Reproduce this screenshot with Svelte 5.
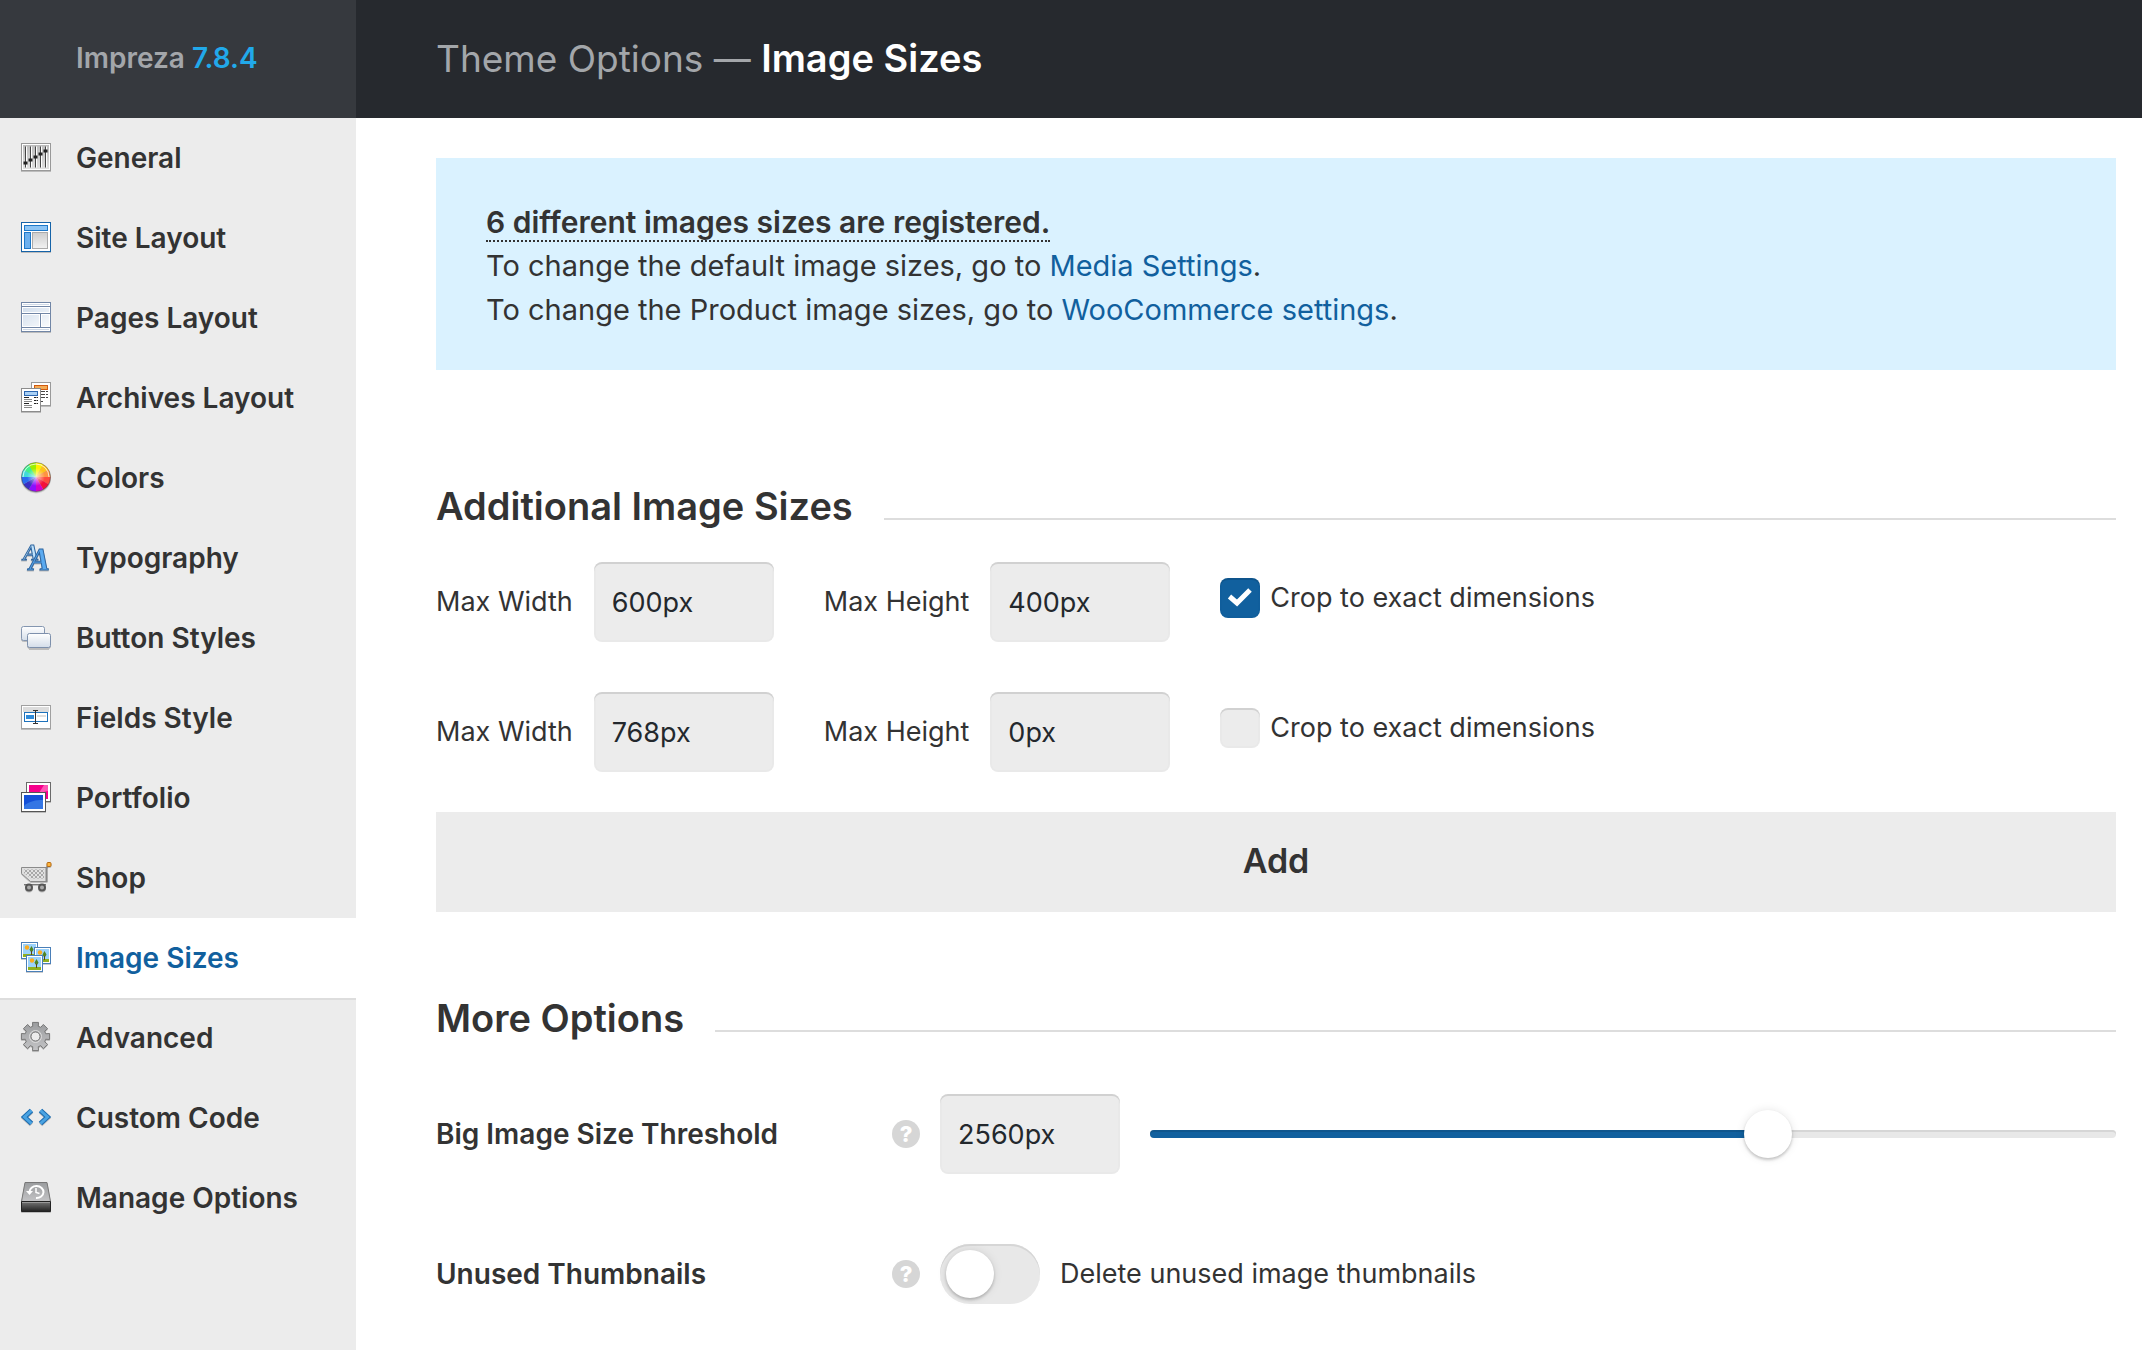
<script lang="ts">
  // Theme options screen: section list on the left, "Image Sizes" panel on the right.

  type Size = { width: string; height: string; crop: boolean }

  const sections = [
    { icon: 'general', label: 'General' },
    { icon: 'site', label: 'Site Layout' },
    { icon: 'pages', label: 'Pages Layout' },
    { icon: 'archives', label: 'Archives Layout' },
    { icon: 'colors', label: 'Colors' },
    { icon: 'typography', label: 'Typography' },
    { icon: 'buttons', label: 'Button Styles' },
    { icon: 'fields', label: 'Fields Style' },
    { icon: 'portfolio', label: 'Portfolio' },
    { icon: 'shop', label: 'Shop' },
    { icon: 'images', label: 'Image Sizes' },
    { icon: 'advanced', label: 'Advanced' },
    { icon: 'code', label: 'Custom Code' },
    { icon: 'manage', label: 'Manage Options' },
  ]

  let active = $state('Image Sizes')
  let sizes = $state<Size[]>([
    { width: '600px', height: '400px', crop: true },
    { width: '768px', height: '0px', crop: false },
  ])
  let threshold = $state(2560)
  let deleteUnused = $state(false)

  const maxThreshold = 4000
  let fill = $derived((threshold / maxThreshold) * 100)

  // Clockwise from twelve o'clock
  const wheelColors = [
    '#fff000', '#ffc21a', '#ff9440', '#ff4a3c', '#f5103a', '#d400c8',
    '#8a10ff', '#3a2fc4', '#2a6cf0', '#3fdcd8', '#3ff08c', '#9cf000',
  ]

  function polar(cx: number, cy: number, r: number, deg: number) {
    const a = ((deg - 90) * Math.PI) / 180
    return `${(cx + r * Math.cos(a)).toFixed(2)} ${(cy + r * Math.sin(a)).toFixed(2)}`
  }

  function wedge(i: number) {
    return `M15 15L${polar(15, 15, 14.5, i * 30)}A14.5 14.5 0 0 1 ${polar(15, 15, 14.5, i * 30 + 30)}Z`
  }

  function gear(teeth: number) {
    const step = 360 / teeth
    let d = ''
    for (let i = 0; i < teeth; i++) {
      const mid = i * step
      const pts = [
        polar(14.5, 14.5, 10.6, mid - 15),
        polar(14.5, 14.5, 14.4, mid - 12),
        polar(14.5, 14.5, 14.4, mid + 12),
        polar(14.5, 14.5, 10.6, mid + 15),
      ]
      d += (i === 0 ? 'M' : 'L') + pts.join('L')
    }
    return d + 'Z'
  }

  function addSize() {
    sizes.push({ width: '0px', height: '0px', crop: false })
  }
</script>

{#snippet photo(x: number, y: number)}
  <g transform="translate({x} {y})">
    <rect x=".5" y=".5" width="16" height="16" fill="#fff" stroke="#4a7fb8" />
    <rect x="2" y="2" width="13" height="13" fill="#9bd2fb" />
    <path d="M2 12h13v3H2z" fill="#8fb01e" />
    <circle cx="6" cy="5.5" r="2.2" fill="#fbab1e" />
    <path d="M10.5 4l2 3.5-1 2h-2l-1-2z" fill="#4f8420" />
    <path d="M10 9h1v4h-1z" fill="#5c4318" />
  </g>
{/snippet}

{#snippet icon(name: string)}
  <svg class="icon" viewBox="-1 0 32 32" aria-hidden="true">
    {#if name === 'general'}
      <rect x=".5" y="1.5" width="29" height="27" fill="#fff" stroke="#999" />
      <rect x="2" y="3" width="26" height="24" fill="url(#steel)" />
      {#each [21, 18, 15, 12, 9] as y, i}
        <path d="M{4.5 + i * 5} 4.5v21" stroke="#444" />
        <path d="M{5.5 + i * 5} 4.5v21" stroke="#fff" />
        <rect x={2.5 + i * 5} y={y - 1.5} width="4" height="3" fill="#222" />
      {/each}
    {:else if name === 'site'}
      <rect x=".5" y=".5" width="29" height="29" fill="#fff" stroke="#1563a8" />
      <rect x="3.5" y="3.5" width="23" height="5" fill="#8cc4f4" stroke="#1e78c8" />
      <rect x="3.5" y="10.5" width="6" height="16" fill="#6cb0ee" stroke="#1e78c8" />
      <rect x="11.5" y="10.5" width="15" height="16" fill="url(#pale)" stroke="#aaa" />
    {:else if name === 'pages'}
      <rect x=".5" y=".5" width="29" height="29" fill="#fff" stroke="#7186a6" />
      <path d="M2 6h26v4H2zM2 13h16v11H2zM21 13h7v11h-7z" fill="url(#mist)" />
      <path d="M2 2.5h26M2 27.5h26" stroke="#cfd9e6" />
      <path d="M1 4.5h28M1 11.5h28M1 25.5h28M19.5 12v13" stroke="#7186a6" />
    {:else if name === 'archives'}
      <rect x="10.5" y=".5" width="19" height="23" fill="#fff" stroke="#9a9a9a" />
      <rect x="13.5" y="3.5" width="13" height="4" fill="#f4ab55" stroke="#d05a10" />
      <path d="M20 9.5h7M20 12.5h7M20 15.5h7M20 19.5h2" stroke="#444" stroke-dasharray="4 1" />
      <rect x=".5" y="6.5" width="19" height="23" fill="#fff" stroke="#8c8c8c" />
      <rect x="3.5" y="9.5" width="13" height="4" fill="#a9d0f5" stroke="#2c66b0" />
      <path d="M3 15.5h5M3 21.5h5" stroke="#222" />
      <path d="M3 17.5h8M3 19.5h8M3 23.5h8M3 25.5h8" stroke="#888" />
      <path d="M13 15.5h4M13 18.5h4M13 21.5h4" stroke="#222" stroke-dasharray="2.5 .5" />
    {:else if name === 'colors'}
      <circle cx="15" cy="15.5" r="15" fill="#8a8a8a" opacity=".5" />
      {#each wheelColors as color, i}
        <path d={wedge(i)} fill={color} />
      {/each}
      <circle cx="15" cy="15" r="9" fill="url(#glow)" />
      <circle cx="15" cy="15" r="14.5" fill="none" stroke="#333" stroke-opacity=".35" />
      <path d="M2 15a13 13 0 0 1 26 0" fill="none" stroke="#fff" stroke-opacity=".7" />
    {:else if name === 'typography'}
      <text class="glyph"><tspan x="2" y="18" font-size="24" fill="#bfe2fb">A</tspan><tspan x="8" y="28" font-size="31" fill="#5aaaf0">A</tspan></text>
    {:else if name === 'buttons'}
      <rect x=".5" y="4.5" width="23" height="14" rx="2" fill="url(#key)" stroke="#8496b0" />
      <rect x="6.5" y="11.5" width="23" height="14" rx="2" fill="url(#key)" stroke="#7d90ac" />
      <path d="M8 26.5h20" stroke="#bbb" />
    {:else if name === 'fields'}
      <rect x=".5" y="3.5" width="29" height="23" fill="#fff" stroke="#a0a0a0" />
      <path d="M2 5h26v5H2z" fill="#dcdcdc" />
      <rect x="3.5" y="10.5" width="23" height="9" fill="#fff" stroke="#1e72bc" />
      <path d="M5 13h8v4H5z" fill="#2f8ad8" />
      <path d="M16 13h9v2h-9z" fill="#dedede" />
      <path d="M12 8.5h5M12 21.5h5M14.5 9v12" stroke="#333" />
    {:else if name === 'portfolio'}
      <rect x="5.5" y=".5" width="24" height="19" fill="#fff" stroke="#6a6a6a" />
      <path d="M8 3h19v14H8z" fill="#f5008c" />
      <path d="M27 3v6l-9 2 5-8z" fill="#ff55b4" />
      <rect x=".5" y="10.5" width="24" height="19" fill="#fff" stroke="#555" />
      <path d="M3 13h19v14H3z" fill="#1450d8" />
      <path d="M3 24c5-5 12-6 19-6v9H3z" fill="#3576e4" />
    {:else if name === 'shop'}
      <path d="M.5 5.5h25v14h-16l-9-8z" fill="#dedede" stroke="#8a8a8a" />
      <path d="M3 7.5h20v9H10L3 11z" fill="url(#mesh)" />
      <path d="M25.5 20V6l2-3" fill="none" stroke="#888" stroke-width="2" />
      <path d="M3 22.5h22" stroke="#777" />
      <rect x="26" y=".5" width="4" height="4" rx="1" fill="#ffb43c" stroke="#b46a14" />
      <circle cx="8" cy="25.5" r="3" fill="#aaa" stroke="#555" stroke-width="2" />
      <circle cx="21" cy="25.5" r="3" fill="#aaa" stroke="#555" stroke-width="2" />
    {:else if name === 'images'}
      {@render photo(0, 0)}
      {@render photo(13, 5)}
      {@render photo(5, 13)}
    {:else if name === 'advanced'}
      <path d={gear(8)} fill="url(#metal)" stroke="#777" stroke-linejoin="round" />
      <circle cx="14.5" cy="14.5" r="6" fill="none" stroke="#ddd" />
      <circle cx="14.5" cy="14.5" r="4.5" fill="#ececec" stroke="#777" />
    {:else if name === 'code'}
      <path d="M10.5 8.5l-7 6.5 7 6.5M19.5 8.5l7 6.5-7 6.5" class="chevron edge" />
      <path d="M10.5 8.5l-7 6.5 7 6.5M19.5 8.5l7 6.5-7 6.5" class="chevron" />
    {:else if name === 'manage'}
      <path d="M4 .5h22l3.500 19H.5z" fill="url(#metal)" stroke="#777" />
      <path d="M.5 19.5h29v10H.5z" fill="url(#dark)" stroke="#222" />
      <path d="M1 20.5h28" stroke="#999" />
      <path d="M8.5 10a7 6 0 1 1 6.500 6" fill="none" stroke="#fff" stroke-width="2" />
      <path d="M5 9h7l-3.500 4z" fill="#fff" />
      <path d="M15 6v4.5l3.500 1" fill="none" stroke="#fff" stroke-width="1.5" />
    {/if}
  </svg>
{/snippet}

{#snippet help(topic: string)}
  <button type="button" class="help" aria-label="Help: {topic}">?</button>
{/snippet}

<svg class="defs" width="0" height="0" aria-hidden="true">
  <defs>
    <linearGradient id="steel" x2="0" y2="1"><stop stop-color="#bbb" /><stop offset="1" stop-color="#e0e0e0" /></linearGradient>
    <linearGradient id="pale" x2="0" y2="1"><stop stop-color="#cdcdcd" /><stop offset="1" stop-color="#f2f2f2" /></linearGradient>
    <linearGradient id="mist" x2="1" y2="1"><stop stop-color="#d2deec" /><stop offset="1" stop-color="#f8fafc" /></linearGradient>
    <linearGradient id="key" x2="0" y2="1"><stop stop-color="#fff" /><stop offset="1" stop-color="#d3dde9" /></linearGradient>
    <linearGradient id="metal" x2="0" y2="1"><stop stop-color="#9a9c9e" /><stop offset="1" stop-color="#c4c4c6" /></linearGradient>
    <linearGradient id="dark" x2="0" y2="1"><stop stop-color="#777" /><stop offset="1" stop-color="#222" /></linearGradient>
    <radialGradient id="glow"><stop stop-color="#fff" stop-opacity=".7" /><stop offset="1" stop-color="#fff" stop-opacity="0" /></radialGradient>
    <pattern id="mesh" width="4" height="4" patternUnits="userSpaceOnUse">
      <path d="M0 0h4v4H0z" fill="#e2e2e2" />
      <path d="M0 0h2v2H0zM2 2h2v2H2z" fill="#a8a8a8" />
    </pattern>
  </defs>
</svg>

<div class="page">
  <header class="header">
    <div class="brand">Impreza <span class="version">7.8.4</span></div>
    <h1>Theme Options — <strong>{active}</strong></h1>
  </header>

  <div class="body">
    <nav class="sidebar" aria-label="Sections">
      {#each sections as { icon: name, label }}
        <a
          href="#{name}"
          class="section"
          class:active={label === active}
          aria-current={label === active ? 'page' : undefined}
          onclick={() => (active = label)}
        >
          {@render icon(name)}
          <span>{label}</span>
        </a>
      {/each}
    </nav>

    <main class="content">
      <div class="notice">
        <p><strong class="hint">6 different images sizes are registered.</strong></p>
        <p>To change the default image sizes, go to <a href="#media">Media Settings</a>.</p>
        <p>To change the Product image sizes, go to <a href="#woocommerce">WooCommerce settings</a>.</p>
      </div>

      <h2>Additional Image Sizes</h2>
      <div class="sizes">
        {#each sizes as size, i}
          <div class="size">
            <div class="field">
              <label for="width-{i}">Max Width</label>
              <input id="width-{i}" class="text" type="text" bind:value={size.width} />
            </div>
            <div class="field">
              <label for="height-{i}">Max Height</label>
              <input id="height-{i}" class="text" type="text" bind:value={size.height} />
            </div>
            <label class="crop">
              <span class="tick">
                <input type="checkbox" bind:checked={size.crop} />
                <svg viewBox="0 0 40 40" aria-hidden="true"><path d="M9.5 18.5L17 25L30 12" /></svg>
              </span>
              Crop to exact dimensions
            </label>
          </div>
        {/each}
      </div>
      <button type="button" class="add" onclick={addSize}>Add</button>

      <h2>More Options</h2>
      <div class="option">
        <label class="name" for="threshold">Big Image Size Threshold</label>
        {@render help('Big Image Size Threshold')}
        <input
          id="threshold"
          class="text"
          type="text"
          value="{threshold}px"
          onchange={(e) => (threshold = parseInt(e.currentTarget.value) || 0)}
        />
        <div class="slider">
          <div class="fill" style="width: {fill}%"></div>
          <input
            type="range"
            min="0"
            max={maxThreshold}
            step="20"
            aria-label="Big Image Size Threshold"
            bind:value={threshold}
          />
        </div>
      </div>
      <div class="option">
        <span class="name">Unused Thumbnails</span>
        {@render help('Unused Thumbnails')}
        <label class="switch">
          <input type="checkbox" role="switch" bind:checked={deleteUnused} />
          Delete unused image thumbnails
        </label>
      </div>
    </main>
  </div>
</div>

<style>
  :global(body) {
    background: #fff;
  }
  .defs {
    position: absolute;
  }
  .page {
    --blue: #11609e;
    --gray: #ececec;
    --inset: inset 0 2px 0 rgba(0, 0, 0, 0.1), inset 0 0 0 2px rgba(0, 0, 0, 0.01);
    display: flex;
    flex-direction: column;
    min-height: 100vh;
    font: 27px/44px Inter, "Liberation Sans", sans-serif;
    color: #333;
  }
  a {
    color: var(--blue);
    text-decoration: none;
  }
  input,
  button {
    margin: 0;
    font: inherit;
    color: inherit;
  }

  .header {
    display: flex;
    height: 118px;
    align-items: stretch;
    background: #26292e;
    color: #a3a6aa;
    line-height: 116px;
  }
  .brand {
    box-sizing: border-box;
    width: 356px;
    padding-left: 76px;
    background: #36393e;
    font-size: 28px;
    font-weight: 600;
  }
  .version {
    color: #21a9ea;
  }
  h1 {
    margin: 0;
    padding-left: 80px;
    font-size: 37px;
    font-weight: 400;
  }
  h1 strong {
    font-size: 38px;
    font-weight: 600;
    color: #fff;
  }

  .body {
    display: flex;
    flex: 1;
  }
  .sidebar {
    flex: 0 0 356px;
    background: var(--gray);
  }
  .section {
    display: flex;
    align-items: center;
    gap: 24px;
    height: 80px;
    padding-left: 20px;
    font-size: 28px;
    font-weight: 600;
    color: #333;
  }
  .section.active {
    background: #fff;
    box-shadow: 0 2px 0 #ddd;
    color: var(--blue);
  }
  .icon {
    width: 32px;
    height: 32px;
    overflow: visible;
    filter: drop-shadow(0 1px 0 rgba(0, 0, 0, 0.2));
  }
  .glyph {
    font-family: "Liberation Serif", serif;
    font-style: italic;
    font-weight: 700;
    stroke: #2f66a0;
    stroke-width: 1;
  }
  .chevron {
    fill: none;
    stroke: #4aa3e2;
    stroke-width: 3;
  }
  .chevron.edge {
    stroke: #1b6bb0;
    stroke-width: 5;
  }

  .content {
    flex: 1;
    min-width: 0;
    padding: 40px 26px 40px 80px;
  }
  .notice {
    padding: 42px 50px 38px;
    background: #daf2ff;
    font-size: 29px;
  }
  .notice p {
    height: 44px;
    margin: 0;
  }
  .hint {
    border-bottom: 2px dotted #333;
    font-size: 30px;
    font-weight: 600;
  }

  h2 {
    display: flex;
    align-items: flex-end;
    gap: 31px;
    margin: 110px 0 30px;
    font-size: 38px;
    font-weight: 600;
    line-height: 52px;
  }
  h2::after {
    content: "";
    flex: 1;
    height: 2px;
    margin-bottom: 12px;
    background: #ddd;
  }
  .sizes {
    display: grid;
    gap: 50px;
  }
  .size {
    display: flex;
    gap: 50px;
  }
  .field {
    display: flex;
    align-items: center;
    gap: 21px;
  }
  .text {
    box-sizing: border-box;
    width: 180px;
    height: 80px;
    padding: 0 18px;
    border: 0;
    border-radius: 8px;
    background: var(--gray);
    box-shadow: var(--inset);
    color: #23282d;
  }
  .crop {
    display: flex;
    align-items: center;
    align-self: flex-start;
    gap: 10px;
    height: 72px;
  }
  .tick {
    display: grid;
  }
  .tick > * {
    grid-area: 1 / 1;
    width: 40px;
    height: 40px;
  }
  .tick input {
    appearance: none;
    border-radius: 8px;
    background: var(--gray);
    box-shadow: var(--inset);
  }
  .tick input:checked {
    background: var(--blue);
  }
  .tick svg {
    fill: none;
    stroke: none;
    stroke-width: 5;
    pointer-events: none;
  }
  .tick input:checked + svg {
    stroke: #fff;
  }
  .add {
    display: block;
    width: 100%;
    height: 100px;
    margin-top: 40px;
    padding: 0 0 2px;
    border: 0;
    background: var(--gray);
    font-size: 34px;
    font-weight: 600;
  }

  .add + h2 {
    margin: 80px 0 50px;
  }
  .option {
    display: flex;
    align-items: center;
    min-height: 80px;
  }
  .option + .option {
    margin-top: 60px;
  }
  .name {
    flex: 0 0 456px;
    font-size: 28px;
    font-weight: 600;
  }
  .help {
    width: 28px;
    height: 28px;
    margin-right: 20px;
    padding: 0;
    border: 0;
    border-radius: 50%;
    background: #d6d6d6;
    color: #fff;
    font-size: 22px;
    font-weight: 800;
    line-height: 28px;
  }
  .slider {
    position: relative;
    flex: 1;
    height: 8px;
    margin-left: 30px;
    border-radius: 4px;
    background: #e8e8e8;
    box-shadow: inset 0 2px 0 #d6d6d6;
  }
  .fill {
    height: 100%;
    border-radius: 4px 0 0 4px;
    background: var(--blue);
    box-shadow: inset 0 2px 0 rgba(0, 0, 0, 0.1);
  }
  /* Reaches half a thumb past both ends of the track */
  .slider input {
    position: absolute;
    top: -20px;
    left: -24px;
    width: calc(100% + 48px);
    height: 48px;
    appearance: none;
    background: none;
  }
  .slider input::-webkit-slider-thumb {
    width: 48px;
    height: 48px;
    appearance: none;
    border-radius: 50%;
    background: #fff;
    box-shadow: 0 2px 3px rgba(0, 0, 0, 0.2), 0 0 10px rgba(0, 0, 0, 0.1);
  }
  .switch {
    display: flex;
    align-items: center;
    gap: 20px;
  }
  .switch input {
    box-sizing: border-box;
    width: 100px;
    height: 60px;
    padding: 6px;
    appearance: none;
    border-radius: 30px;
    background: #e8e8e8;
    box-shadow: inset 0 2px 0 #d6d6d6;
  }
  .switch input::before {
    content: "";
    display: block;
    width: 48px;
    height: 48px;
    border-radius: 50%;
    background: #fff;
    box-shadow: 0 2px 3px rgba(0, 0, 0, 0.2), 0 0 10px rgba(0, 0, 0, 0.1);
  }
  .switch input:checked {
    background: var(--blue);
  }
  .switch input:checked::before {
    margin-left: 40px;
  }
</style>
